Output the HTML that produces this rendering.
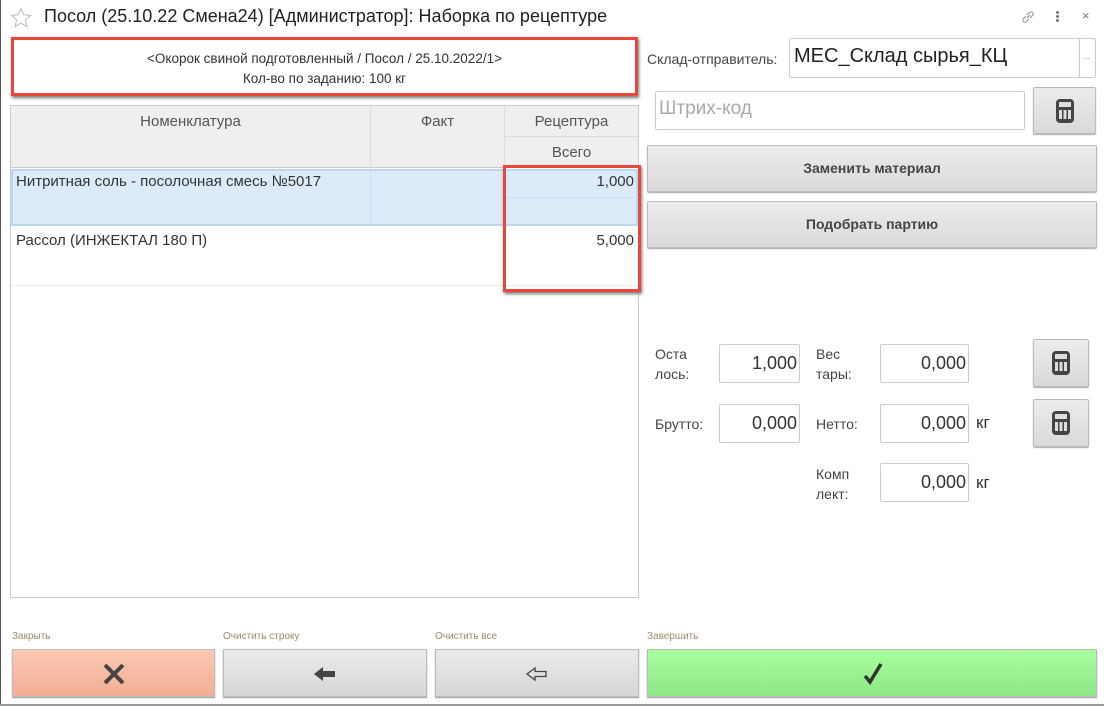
<!DOCTYPE html><html><head><meta charset="utf-8"><style>
*{box-sizing:border-box;margin:0;padding:0}
body{width:1104px;height:706px;background:#fff;font-family:"Segoe UI","Liberation Sans","DejaVu Sans",sans-serif;color:#333;position:relative;overflow:hidden}
.a{position:absolute}
.btn{position:absolute;border:1px solid #bbb;border-radius:2px;background:linear-gradient(#ececec,#d9d9d9);box-shadow:0 1px 1px #aaa;text-align:center;font-weight:bold;font-size:14px;color:#444}
.inp{position:absolute;border:1px solid #ccc;border-radius:2px;background:#fff;text-align:right;font-size:18px;padding-right:2px;color:#333}
.lbl{position:absolute;font-size:14px;color:#444;line-height:20px}
.calc{width:18px;height:24px;background:#444;border-radius:4px;position:absolute;left:50%;top:50%;margin:-12px 0 0 -9px}
.calc:before{content:"";position:absolute;left:3px;top:3px;width:12px;height:5px;background:#ddd}
.calc:after{content:"";position:absolute;left:3px;top:11px;width:12px;height:9px;background:repeating-linear-gradient(90deg,#ddd 0 3px,transparent 3px 4.5px)}
.bl{position:absolute;top:631px;font-size:10px;color:#9a8a6a}
.bb{position:absolute;top:649px;height:48px;border:1px solid #bbb;box-shadow:0 1px 1px #999}
</style></head><body>
<div class="a" style="left:0;top:0;width:1px;height:706px;background:#555"></div>
<svg class="a" style="left:10px;top:7px" width="22" height="22" viewBox="0 0 22 22"><path d="M11 1.5l2.8 6.3 6.8.6-5.2 4.5 1.6 6.7L11 16.1l-6 3.5 1.6-6.7-5.2-4.5 6.8-.6z" fill="none" stroke="#bbb" stroke-width="1"/></svg>
<div class="a" style="left:44px;top:6px;font-size:18px;color:#222">Посол (25.10.22 Смена24) [Администратор]: Наборка по рецептуре</div>
<svg class="a" style="left:1020px;top:9px" width="16" height="16" viewBox="0 0 16 16"><path d="M7 9l3-3M6 7L3.5 9.5a2.1 2.1 0 003 3L9 10M10 9l2.5-2.5a2.1 2.1 0 00-3-3L7 6" fill="none" stroke="#999" stroke-width="1.2"/></svg>
<div class="a" style="left:1056px;top:11px;width:3px;height:3px;background:#777;border-radius:50%;box-shadow:0 4px #777,0 8px #777"></div>
<div class="a" style="left:1082px;top:8px;font-size:13px;color:#777">×</div>

<div class="a" style="left:11px;top:37px;width:627px;height:59px;border:3px solid #e8483c;box-shadow:1px 2px 3px #777;text-align:center;font-size:13.5px;line-height:20px;padding-top:9px;color:#333">&lt;Окорок свиной подготовленный / Посол / 25.10.2022/1&gt;<br>Кол-во по заданию: 100 кг</div>

<div class="a" style="left:10px;top:105px;width:629px;height:493px;border:1px solid #ccc"></div>
<div class="a" style="left:11px;top:106px;width:627px;height:62px;background:#efefef;border-bottom:1px solid #ccc"></div>
<div class="a" style="left:370px;top:106px;width:1px;height:62px;background:#ddd"></div>
<div class="a" style="left:504px;top:106px;width:1px;height:62px;background:#ddd"></div>
<div class="a" style="left:505px;top:136px;width:133px;height:1px;background:#ddd"></div>
<div class="a" style="left:11px;top:113px;width:359px;text-align:center;font-size:15px;color:#555">Номенклатура</div>
<div class="a" style="left:371px;top:113px;width:133px;text-align:center;font-size:15px;color:#555">Факт</div>
<div class="a" style="left:505px;top:113px;width:133px;text-align:center;font-size:15px;color:#555">Рецептура</div>
<div class="a" style="left:505px;top:144px;width:133px;text-align:center;font-size:15px;color:#555">Всего</div>
<div class="a" style="left:11px;top:169px;width:627px;height:57px;background:#dcebf9;border:2px solid #b9d7f2"></div>
<div class="a" style="left:370px;top:171px;width:1px;height:53px;background:#c8dff3"></div>
<div class="a" style="left:505px;top:197px;width:133px;height:1px;background:#c8dff3"></div>
<div class="a" style="left:16px;top:173px;font-size:15px;color:#333">Нитритная соль - посолочная смесь №5017</div>
<div class="a" style="left:505px;top:173px;width:129px;text-align:right;font-size:15px">1,000</div>
<div class="a" style="left:11px;top:285px;width:627px;height:1px;background:#eee"></div>
<div class="a" style="left:16px;top:232px;font-size:15px;color:#333">Рассол (ИНЖЕКТАЛ 180 П)</div>
<div class="a" style="left:505px;top:232px;width:129px;text-align:right;font-size:15px">5,000</div>
<div class="a" style="left:503px;top:165px;width:138px;height:127px;border:3px solid #e8483c;box-shadow:1px 2px 3px #777"></div>

<div class="lbl" style="left:647px;top:49px">Склад-отправитель:</div>
<div class="a" style="left:789px;top:38px;width:307px;height:40px;border:1px solid #ccc;border-radius:2px;font-size:20px;padding:6px 0 0 4px;color:#222">МЕС_Склад сырья_КЦ</div>
<div class="a" style="left:1079px;top:38px;width:1px;height:40px;background:#ccc"></div>
<div class="a" style="left:1083px;top:52px;font-size:8px;color:#999">...</div>
<div class="a" style="left:655px;top:91px;width:370px;height:39px;border:1px solid #ccc;border-radius:2px;font-size:19px;padding:6px 0 0 3px;color:#aaa">Штрих-код</div>
<div class="btn" style="left:1033px;top:87px;width:63px;height:47px"><div class="calc"></div></div>
<div class="btn" style="left:647px;top:145px;width:450px;height:47px;line-height:45px">Заменить материал</div>
<div class="btn" style="left:647px;top:201px;width:450px;height:47px;line-height:45px">Подобрать партию</div>

<div class="lbl" style="left:655px;top:344px">Оста<br>лось:</div>
<div class="inp" style="left:719px;top:344px;width:81px;height:39px;line-height:37px">1,000</div>
<div class="lbl" style="left:816px;top:344px">Вес<br>тары:</div>
<div class="inp" style="left:880px;top:344px;width:89px;height:39px;line-height:37px">0,000</div>
<div class="btn" style="left:1033px;top:339px;width:56px;height:48px"><div class="calc"></div></div>
<div class="lbl" style="left:655px;top:414px">Брутто:</div>
<div class="inp" style="left:719px;top:404px;width:81px;height:39px;line-height:37px">0,000</div>
<div class="lbl" style="left:816px;top:414px">Нетто:</div>
<div class="inp" style="left:880px;top:404px;width:89px;height:39px;line-height:37px">0,000</div>
<div class="a" style="left:976px;top:413px;font-size:17px">кг</div>
<div class="btn" style="left:1033px;top:399px;width:56px;height:48px"><div class="calc"></div></div>
<div class="lbl" style="left:816px;top:464px">Комп<br>лект:</div>
<div class="inp" style="left:880px;top:463px;width:89px;height:39px;line-height:37px">0,000</div>
<div class="a" style="left:976px;top:473px;font-size:17px">кг</div>

<div class="a" style="left:0;top:704px;width:1104px;height:2px;background:#999"></div>
<div class="bl" style="left:12px">Закрыть</div>
<div class="bl" style="left:223px">Очистить строку</div>
<div class="bl" style="left:435px">Очистить все</div>
<div class="bl" style="left:647px">Завершить</div>
<div class="bb" style="left:12px;width:203px;background:linear-gradient(#fec8b2,#f1ae95)"><svg class="a" style="left:89px;top:13px" width="24" height="22"><path d="M3 2L21 20M21 2L3 20" stroke="#444" stroke-width="4"/></svg></div>
<div class="bb" style="left:223px;width:204px;background:linear-gradient(#ebebeb,#d6d6d6)"><svg class="a" style="left:89px;top:16px" width="24" height="16"><path d="M1 8L10 1V5H22V11H10V15Z" fill="#444"/></svg></div>
<div class="bb" style="left:435px;width:204px;background:linear-gradient(#ebebeb,#d6d6d6)"><svg class="a" style="left:89px;top:16px" width="24" height="16"><path d="M2 8L10 2V5.5H21V10.5H10V14Z" fill="none" stroke="#444" stroke-width="1.3"/></svg></div>
<div class="bb" style="left:647px;width:450px;background:linear-gradient(#aaffa0,#8ee684)"><svg class="a" style="left:214px;top:12px" width="22" height="24"><path d="M3 14L8 20L19 2" fill="none" stroke="#333" stroke-width="3.5"/></svg></div>
</body></html>
